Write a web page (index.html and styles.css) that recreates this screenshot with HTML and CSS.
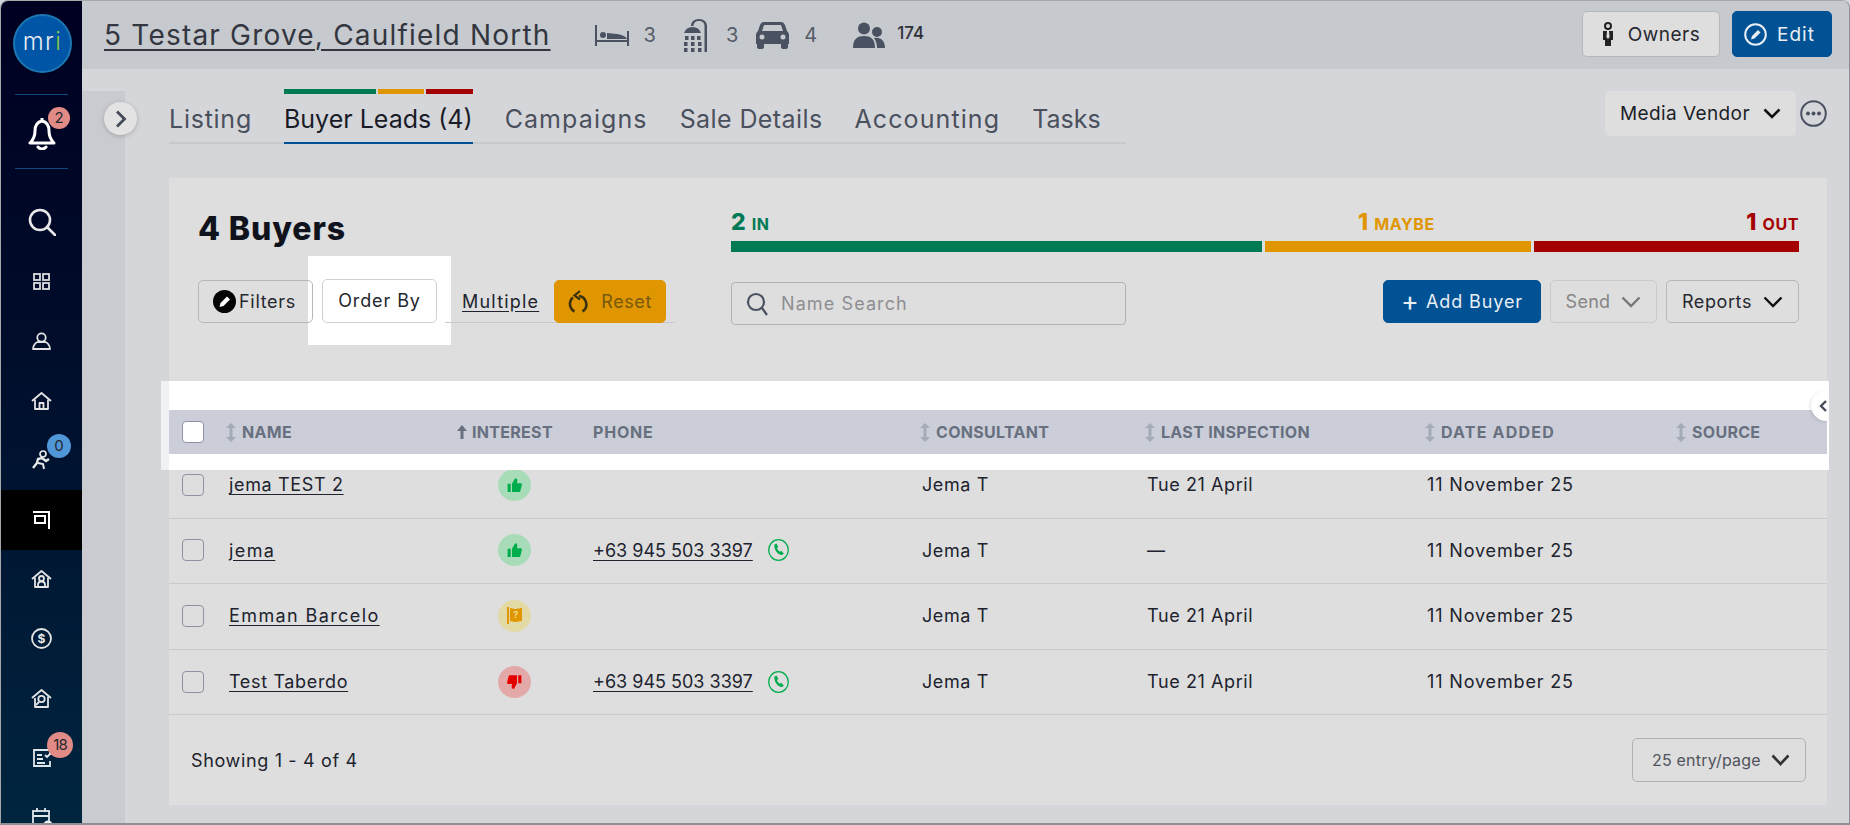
FILE: index.html
```html
<!DOCTYPE html>
<html lang="en">
<head>
  <meta charset="utf-8">
  <title>Buyer Leads</title>
  <link rel="stylesheet" href="styles.css">
</head>
<body>
  <div class="window">
    <!-- Left navigation -->
    <aside class="sidebar">
      <div class="logo-wrap">
        <div class="logo"><span>m</span><span>r</span><span class="logo-i">i</span></div>
      </div>
      <div class="bell-wrap">
        <svg width="28" height="33" viewBox="0 0 28 33" fill="none" stroke="#fff" stroke-width="3" stroke-linejoin="round"><path d="M14 4c-5 1-7 5-7 10 0 5-1 8-5 12h24c-4-4-5-7-5-12 0-5-2-9-7-10z"/><path d="M14 1v3"/><path d="M10 30c2 2.500 6 2.500 8 0" stroke-linecap="round"/></svg>
        <span class="badge badge-red">2</span>
      </div>
      <nav class="side-nav">
        <a class="side-item">
          <svg width="28" height="28" viewBox="0 0 28 28" fill="none" stroke="#e8e8e8" stroke-width="2.600"><circle cx="12" cy="12" r="10"/><path d="M19 19l8 8" stroke-linecap="round"/></svg>
        </a>
        <a class="side-item">
          <svg width="17" height="17" viewBox="0 0 17 17" fill="none" stroke="#dcdcdc" stroke-width="1.800"><rect x="1" y="1" width="6" height="6"/><rect x="10" y="1" width="6" height="6"/><rect x="1" y="10" width="6" height="6"/><rect x="10" y="10" width="6" height="6"/></svg>
        </a>
        <a class="side-item">
          <svg width="19" height="18" viewBox="0 0 19 18" fill="none" stroke="#e4e4e4" stroke-width="1.800"><circle cx="9.500" cy="5.500" r="4.200"/><path d="M1 17c0-4 3-6.500 4.500-7h8C15 10.500 18 13 18 17z" stroke-linejoin="round"/></svg>
        </a>
        <a class="side-item">
          <svg width="21" height="18" viewBox="0 0 21 18" fill="none" stroke="#e4e4e4" stroke-width="1.800" stroke-linejoin="round"><path d="M1 9l9.500-8L20 9"/><path d="M4 7.500V17h13V7.500"/><path d="M8.500 17v-6h4v6"/></svg>
        </a>
        <a class="side-item">
          <svg width="20" height="20" viewBox="0 0 20 20" fill="none" stroke="#e8e8e8" stroke-width="1.700"><circle cx="11" cy="4" r="3"/><path d="M1 18l4-5 1-4 4-1 4 3 3-2" stroke-width="2.400"/><path d="M6 13l5 1 1 5" stroke-width="2"/></svg>
          <span class="badge badge-blue">0</span>
        </a>
        <a class="side-item is-active">
          <svg width="17" height="19" viewBox="0 0 17 19" fill="none" stroke="#fff" stroke-width="2"><path d="M0 2h16v17"/><rect x="2" y="6" width="10" height="7"/></svg>
        </a>
        <a class="side-item">
          <svg width="21" height="18" viewBox="0 0 21 18" fill="none" stroke="#e4e4e4" stroke-width="1.800" stroke-linejoin="round"><path d="M1 9l9.500-8L20 9"/><path d="M4 7.500V17h13V7.500"/><circle cx="10.500" cy="8.500" r="2.500"/><path d="M7 17v-2c0-2 1.500-3.500 3.500-3.500S14 13 14 15v2"/></svg>
        </a>
        <a class="side-item">
          <svg width="21" height="21" viewBox="0 0 21 21" fill="none" stroke="#e4e4e4" stroke-width="1.800"><circle cx="10.500" cy="10.500" r="9.500"/><text x="10.500" y="15" text-anchor="middle" class="dollar">$</text></svg>
        </a>
        <a class="side-item">
          <svg width="21" height="19" viewBox="0 0 21 19" fill="none" stroke="#e4e4e4" stroke-width="1.800" stroke-linejoin="round"><path d="M1 9l9.500-8L20 9"/><path d="M4 9v9h13V7.500"/><circle cx="10.500" cy="10" r="3.200"/><path d="M8 13l-3 3"/></svg>
        </a>
        <a class="side-item">
          <svg width="18" height="18" viewBox="0 0 18 18" fill="none" stroke="#dfe6ea" stroke-width="1.800"><path d="M17 6V1H1v16h16v-5"/><path d="M4 6h5M4 10h6M4 14h8"/><path d="M12 6l2 2 3-3"/></svg>
          <span class="badge badge-red badge-wide">18</span>
        </a>
        <a class="side-item">
          <svg width="20" height="20" viewBox="0 0 20 20" fill="none" stroke="#dfe6ea" stroke-width="1.800"><rect x="1" y="3" width="16" height="16"/><path d="M1 8h16M5 0v4M13 0v4"/><circle cx="16" cy="17" r="4.500" fill="#e8eef0" stroke="none"/></svg>
        </a>
      </nav>
    </aside>

    <main class="main">
      <!-- Property header -->
      <header class="topbar">
        <a class="address">5 Testar Grove, Caulfield North</a>
        <div class="features">
          <svg class="feat-bed" width="34" height="22" viewBox="0 0 34 22" fill="#4a5262"><path d="M0 1h2v21H0zM32 7h2v15h-2zM2 16h30v2H2z"/><circle cx="8" cy="11" r="3"/><path d="M12 9l10 1c3 .3 9 2 10 5H12z"/></svg>
          <span class="feat-num">3</span>
          <svg class="feat-shower" width="28" height="34" viewBox="0 0 28 34" fill="#4a5262"><path d="M1 15a9 9 0 0 1 17 0H1z"/><path d="M8 8c0-4 3-7 8-7 5 0 8 3 8 7v26h-2.500V8c0-3-2-5-5.500-5s-5.500 2-5.500 5z"/><path d="M2 18h3.500v4H2zM8 18h3.500v4H8zM14 18h3.500v4H14zM1 24h3.500v4H1zM8 24h3.500v4H8zM15 24h3.500v4H15zM1 30h3.500v4H1zM8 30h3.500v4H8zM15 30h3.500v4H15z"/></svg>
          <span class="feat-num">3</span>
          <svg class="feat-car" width="33" height="28" viewBox="0 0 33 28" fill="#4a5262"><path d="M8 1h17c2 0 3 1 4 3l2 6c1 1 2 2 2 4v9h-1v3c0 1-1 2-2 2h-3c-1 0-2-1-2-2v-3H8v3c0 1-1 2-2 2H3c-1 0-2-1-2-2v-3H0v-9c0-2 1-3 2-4l2-6c1-2 2-3 4-3z"/><path d="M8 4h17l2 6H6z" fill="#c6c9ce"/><circle cx="6" cy="16" r="2.500" fill="#c6c9ce"/><circle cx="27" cy="16" r="2.500" fill="#c6c9ce"/></svg>
          <span class="feat-num">4</span>
          <svg class="feat-people" width="32" height="26" viewBox="0 0 32 26" fill="#4a5262"><circle cx="11" cy="6.500" r="6"/><path d="M0 26c0-9 4-12 11-12s11 3 11 12z"/><circle cx="24" cy="10" r="5"/><path d="M21 16c7-1 11 3 11 10h-8c0-4-1-7-3-10z"/></svg>
          <span class="feat-total">174</span>
        </div>
        <div class="top-actions">
          <button class="btn btn-owners" type="button">
            <svg width="12" height="24" viewBox="0 0 12 24" fill="#222"><circle cx="6" cy="4" r="3" fill="none" stroke="#222" stroke-width="2"/><path d="M1 9h10v9H9v6H3v-6H1z"/><path d="M5 9h2l.6 6L6 17l-1.600-2z" fill="#ddd"/></svg>
            Owners
          </button>
          <button class="btn btn-primary btn-edit" type="button">
            <svg width="23" height="23" viewBox="0 0 23 23" fill="none" stroke="#e8eef5" stroke-width="2"><circle cx="11.500" cy="11.500" r="10.300"/><path d="M7 16.500l1-3.500 6-6 2.500 2.500-6 6z" fill="#e8eef5" stroke="none"/></svg>
            Edit
          </button>
        </div>
      </header>

      <div class="content">
        <div class="strip"></div>
        <span class="side-handle">
          <svg width="12" height="18" viewBox="0 0 12 18" fill="none" stroke="#454b58" stroke-width="2.800"><path d="M2 1.500L9.500 9 2 16.500"/></svg>
        </span>

        <div class="page">
          <!-- Tabs -->
          <div class="tabbar">
            <div class="tabs">
              <a class="tab tab-first">Listing</a>
              <a class="tab tab-active">
                <span class="tab-bars"><i class="seg-green"></i><i class="seg-orange"></i><i class="seg-red"></i></span>
                Buyer Leads (4)
              </a>
              <a class="tab tab-wide">Campaigns</a>
              <a class="tab tab-narrow">Sale Details</a>
              <a class="tab tab-wide">Accounting</a>
              <a class="tab tab-tight">Tasks</a>
            </div>
            <div class="tab-right">
              <div class="vendor-select">Media Vendor
                <svg width="18" height="11" viewBox="0 0 18 11" fill="none" stroke="#111" stroke-width="2.600"><path d="M1.500 1.500L9 9l7.500-7.500"/></svg>
              </div>
              <svg class="more" width="27" height="27" viewBox="0 0 27 27" fill="none" stroke="#4a5262" stroke-width="2"><circle cx="13.500" cy="13.500" r="12.300"/><g fill="#4a5262" stroke="none"><circle cx="8" cy="13.500" r="2"/><circle cx="13.500" cy="13.500" r="2"/><circle cx="19" cy="13.500" r="2"/></g></svg>
            </div>
          </div>

          <section class="panel">
            <div class="panel-top">
              <h1 class="panel-title">4 Buyers</h1>
              <div class="stats">
                <div class="stat-labels">
                  <span class="stat stat-in"><b>2</b> IN</span>
                  <span class="stat stat-maybe"><b>1</b> MAYBE</span>
                  <span class="stat stat-out"><b>1</b> OUT</span>
                </div>
                <div class="stat-bar"><i class="seg-green"></i><i class="seg-orange"></i><i class="seg-red"></i></div>
              </div>

              <div class="filters">
                <button class="btn btn-filters" type="button">
                  <svg width="23" height="23" viewBox="0 0 23 23"><circle cx="11.500" cy="11.500" r="11.500" fill="#050505"/><path d="M6.500 17l1-4 6.500-6.500 3 3-6.500 6.500z" fill="#fff"/></svg>
                  Filters
                </button>
                <span class="order-spot">
                  <button class="btn btn-order" type="button">Order By</button>
                </span>
                <a class="multiple">Multiple</a>
                <button class="btn btn-reset" type="button">
                  <svg width="20" height="24" viewBox="0 0 20 24" fill="none" stroke="#3d3210" stroke-width="2.600"><path d="M5 7.500a8.500 8.500 0 0 0 1.500 14"/><path d="M11 6a8.500 8.500 0 0 1 3.500 15.500"/><path d="M12 1L6.500 5.500l5.500 4" stroke-width="2.200"/></svg>
                  Reset
                </button>
              </div>

              <div class="tools">
                <label class="search">
                  <svg width="22" height="24" viewBox="0 0 22 24" fill="none" stroke="#4a5262" stroke-width="2.200"><circle cx="10" cy="10" r="8"/><path d="M16 16l5 7"/></svg>
                  <span class="search-text">Name Search</span>
                </label>
                <div class="tool-buttons">
                  <button class="btn btn-primary btn-add" type="button"><span class="plus">+</span> Add Buyer</button>
                  <button class="btn btn-send" type="button">Send
                    <svg width="20" height="12" viewBox="0 0 20 12" fill="none" stroke="#777" stroke-width="2.400"><path d="M1.500 1.500L10 10l8.500-8.500"/></svg>
                  </button>
                  <button class="btn btn-reports" type="button">Reports
                    <svg width="20" height="12" viewBox="0 0 20 12" fill="none" stroke="#111" stroke-width="2.400"><path d="M1.500 1.500L10 10l8.500-8.500"/></svg>
                  </button>
                </div>
              </div>
            </div>

            <!-- Buyers table -->
            <div class="head-band">
              <div class="tr thead">
                <span class="cell-check"><span class="checkbox checkbox-white"></span></span>
                <span class="th"><svg class="sort" width="10" height="19" viewBox="0 0 10 19" fill="#a4abb7"><path d="M5 0l5 5H6.500v9H10l-5 5-5-5h3.500V5H0z"/></svg>NAME</span>
                <span class="th"><svg class="sort-up" width="10" height="14" viewBox="0 0 10 14" fill="#687080"><path d="M5 0l5 6H6.500v8h-3V6H0z"/></svg>INTEREST</span>
                <span class="th th-phone">PHONE</span>
                <span class="th"><svg class="sort" width="10" height="19" viewBox="0 0 10 19" fill="#a4abb7"><path d="M5 0l5 5H6.500v9H10l-5 5-5-5h3.500V5H0z"/></svg>CONSULTANT</span>
                <span class="th"><svg class="sort" width="10" height="19" viewBox="0 0 10 19" fill="#a4abb7"><path d="M5 0l5 5H6.500v9H10l-5 5-5-5h3.500V5H0z"/></svg>LAST INSPECTION</span>
                <span class="th th-wide"><svg class="sort" width="10" height="19" viewBox="0 0 10 19" fill="#a4abb7"><path d="M5 0l5 5H6.500v9H10l-5 5-5-5h3.500V5H0z"/></svg>DATE ADDED</span>
                <span class="th"><svg class="sort" width="10" height="19" viewBox="0 0 10 19" fill="#a4abb7"><path d="M5 0l5 5H6.500v9H10l-5 5-5-5h3.500V5H0z"/></svg>SOURCE</span>
              </div>
              <span class="band-handle">
                <svg width="8" height="12" viewBox="0 0 8 12" fill="none" stroke="#454b58" stroke-width="2.400"><path d="M7 1L2 6l5 5"/></svg>
              </span>
            </div>

            <div class="tbody">
              <div class="tr row row-first">
                <span class="cell-check"><span class="checkbox"></span></span>
                <a class="name">jema TEST 2</a>
                <span class="interest"><span class="dot dot-in"><svg width="15" height="16" viewBox="0 0 24 24" fill="#00ad4c"><path d="M1 10h5v13H1zM8 23V10l5-9c2 0 4 1.500 3.500 4.500L16 9h6c1.200 0 2 1 2 2l-2.500 10c-.3 1.200-1 2-2.500 2z"/></svg></span></span>
                <span class="phone"></span>
                <span class="cell-consultant">Jema T</span>
                <span class="cell-last">Tue 21 April</span>
                <span class="cell-date">11 November 25</span>
                <span></span>
              </div>
              <div class="tr row">
                <span class="cell-check"><span class="checkbox"></span></span>
                <a class="name name-wide">jema</a>
                <span class="interest"><span class="dot dot-in"><svg width="15" height="16" viewBox="0 0 24 24" fill="#00ad4c"><path d="M1 10h5v13H1zM8 23V10l5-9c2 0 4 1.500 3.500 4.500L16 9h6c1.200 0 2 1 2 2l-2.500 10c-.3 1.200-1 2-2.500 2z"/></svg></span></span>
                <span class="phone"><a class="phone-link">+63 945 503 3397</a>
                  <svg class="wa" width="21" height="22" viewBox="0 0 21 22" fill="none" stroke="#00ad4c" stroke-width="1.300"><ellipse cx="10.500" cy="11" rx="9.800" ry="10.300"/><path d="M6.500 5.500l2-1 1.800 3.500-1.300 1c.4 1.500 1.500 3 3 3.800l1.200-1 2.600 2.700-1.600 1.500c-4 .5-8.700-5.500-7.700-10.500z" fill="#00ad4c" stroke="none"/></svg>
                </span>
                <span class="cell-consultant">Jema T</span>
                <span class="cell-last">—</span>
                <span class="cell-date">11 November 25</span>
                <span></span>
              </div>
              <div class="tr row">
                <span class="cell-check"><span class="checkbox"></span></span>
                <a class="name name-wide">Emman Barcelo</a>
                <span class="interest"><span class="dot dot-maybe"><svg width="16" height="17" viewBox="0 0 16 17" fill="#e09600"><path d="M0 0h2v17H0zM3 1l5 1 7-1v13l-7 1-5-1z"/><text x="9" y="11" text-anchor="middle" class="flag-q">?</text></svg></span></span>
                <span class="phone"></span>
                <span class="cell-consultant">Jema T</span>
                <span class="cell-last">Tue 21 April</span>
                <span class="cell-date">11 November 25</span>
                <span></span>
              </div>
              <div class="tr row">
                <span class="cell-check"><span class="checkbox"></span></span>
                <a class="name">Test Taberdo</a>
                <span class="interest"><span class="dot dot-out"><svg width="15" height="16" viewBox="0 0 24 24" fill="#e40000"><path d="M18 1h5v13h-5zM16 1v13l-5 9c-2 0-4-1.500-3.500-4.500L8 15H2c-1.200 0-2-1-2-2L2.500 3C2.800 1.800 3.500 1 5 1z"/></svg></span></span>
                <span class="phone"><a class="phone-link">+63 945 503 3397</a>
                  <svg class="wa" width="21" height="22" viewBox="0 0 21 22" fill="none" stroke="#00ad4c" stroke-width="1.300"><ellipse cx="10.500" cy="11" rx="9.800" ry="10.300"/><path d="M6.500 5.500l2-1 1.800 3.500-1.300 1c.4 1.500 1.500 3 3 3.800l1.200-1 2.600 2.700-1.600 1.500c-4 .5-8.700-5.500-7.700-10.500z" fill="#00ad4c" stroke="none"/></svg>
                </span>
                <span class="cell-consultant">Jema T</span>
                <span class="cell-last">Tue 21 April</span>
                <span class="cell-date">11 November 25</span>
                <span></span>
              </div>
            </div>

            <div class="panel-foot">
              <span class="showing">Showing 1 - 4 of 4</span>
              <div class="page-size">25 entry/page
                <svg width="19" height="12" viewBox="0 0 19 12" fill="none" stroke="#333" stroke-width="2.600"><path d="M1.500 1.500L9.500 10l8-8.500"/></svg>
              </div>
            </div>
          </section>
        </div>
      </div>
    </main>
  </div>
</body>
</html>
```

FILE: styles.css
```css
* {
  box-sizing: border-box;
}
html, body {
  margin: 0;
  height: 825px;
  overflow: hidden;
  background: #d5d6da;
}
body {
  font-family: Inter, "Open Sans", sans-serif;
  color: #20232e;
}
.window {
  display: flex;
  height: 825px;
  border-top: 1px solid #a6a7aa;
  border-right: 1px solid #8d8e91;
  border-bottom: 2px solid #8d8e91;
  border-left: 1px solid #a6a7aa;
  border-radius: 8px 8px 0 0;
  overflow: hidden;
}

/* Sidebar */
.sidebar {
  width: 81px;
  flex-shrink: 0;
  background: linear-gradient(180deg, #000021 0%, #000c2a 40%, #00253f 100%);
  overflow: hidden;
}
.logo-wrap {
  height: 94px;
  padding-top: 13px;
  margin: 0 14px;
  border-bottom: 1px solid #0a4a80;
}
.logo {
  width: 59px;
  height: 59px;
  margin-left: -2px;
  border-radius: 50%;
  background: #0055a6;
  border: 2px solid #1b78b2;
  display: flex;
  justify-content: center;
  align-items: center;
  color: #e9eef2;
  font-size: 24px;
  font-weight: 300;
  letter-spacing: 1.5px;
  padding-bottom: 4px;
}
.logo-i {
  color: #8dc63f;
}
.bell-wrap {
  position: relative;
  height: 74px;
  margin: 0 14px;
  border-bottom: 1px solid #0a4a80;
  padding: 22px 0 0 13px;
}
.bell-wrap .badge {
  top: 12px;
  left: 33px;
}
.side-nav {
  padding-top: 23px;
}
.side-item {
  position: relative;
  display: flex;
  height: 59.6px;
  justify-content: center;
  align-items: center;
}
.side-item .badge {
  top: 4px;
  left: 46px;
}
.is-active {
  background: #000;
}
.badge {
  position: absolute;
  width: 22px;
  height: 22px;
  border-radius: 50%;
  font-size: 15px;
  line-height: 22px;
  text-align: center;
  color: #26262e;
}
.badge-red {
  background: #e18b86;
}
.badge-blue {
  width: 24px;
  height: 24px;
  line-height: 24px;
  background: #4f97d6;
}
.badge-wide {
  width: 26px;
  height: 26px;
  line-height: 26px;
  letter-spacing: -1px;
}
.dollar {
  font-size: 12px;
  font-weight: 700;
  fill: #e4e4e4;
  stroke: none;
}

/* Header */
.main {
  flex: 1;
  display: flex;
  flex-direction: column;
  min-width: 0;
}
.topbar {
  height: 68px;
  flex-shrink: 0;
  display: flex;
  align-items: center;
  padding: 0 17px 0 22px;
  background: #c6c9ce;
}
.address {
  font-size: 28px;
  color: #33363f;
  text-decoration: underline;
  text-decoration-thickness: 2px;
  text-underline-offset: 4px;
  letter-spacing: 1.2px;
  white-space: nowrap;
}
.features {
  display: flex;
  align-items: center;
  margin-left: 44px;
  color: #555b68;
  font-size: 20px;
}
.feat-num {
  margin: 0 18px 0 15px;
}
.feat-shower {
  margin-left: 9px;
}
.feat-people {
  margin-left: 18px;
}
.feat-total {
  margin-left: 12px;
  font-size: 17px;
  font-weight: 500;
  color: #2d3038;
  position: relative;
  top: -2px;
}
.top-actions {
  margin-left: auto;
  display: flex;
  gap: 12px;
  margin-top: -2px;
}

/* Buttons */
.btn {
  display: inline-flex;
  align-items: center;
  justify-content: center;
  height: 43px;
  border: 1px solid #b5b7bc;
  border-radius: 5px;
  background: transparent;
  font-family: inherit;
  font-size: 18px;
  color: #26282f;
  white-space: nowrap;
  padding: 0;
}
.btn-owners {
  width: 138px;
  height: 46px;
  gap: 14px;
  background: #dedede;
  font-size: 19px;
  letter-spacing: .5px;
}
.btn-primary {
  background: #005295;
  border-color: #005295;
  color: #e9eef4;
}
.btn-edit {
  width: 100px;
  height: 46px;
  gap: 10px;
  justify-content: flex-start;
  padding-left: 11px;
  font-size: 19px;
  letter-spacing: 1px;
}
.btn-filters {
  width: 115px;
  gap: 3px;
  justify-content: flex-start;
  padding-left: 14px;
  letter-spacing: .7px;
}
.order-spot {
  display: flex;
  align-items: center;
  width: 143px;
  height: 89px;
  margin: -24px -14px -22px -5px;
  padding-left: 14px;
  background: #fff;
}
.btn-order {
  width: 115px;
  height: 44px;
  background: #fff;
  border-color: #cfd1d6;
  letter-spacing: .9px;
}
.multiple {
  margin-left: 25px;
  font-size: 18px;
  letter-spacing: 1.2px;
  text-decoration: underline;
  text-underline-offset: 3px;
}
.btn-reset {
  width: 112px;
  margin-left: 15px;
  gap: 13px;
  justify-content: flex-start;
  padding-left: 13px;
  background: #e09600;
  border-color: #e09600;
  color: #77590f;
  letter-spacing: .6px;
}
.btn-add {
  width: 158px;
  gap: 7px;
  letter-spacing: .9px;
}
.plus {
  font-size: 27px;
  line-height: 1;
  letter-spacing: 0;
}
.btn-send {
  width: 107px;
  gap: 11px;
  border-color: #c9cacd;
  color: #858585;
  letter-spacing: .3px;
}
.btn-reports {
  width: 133px;
  gap: 11px;
  letter-spacing: .6px;
}

/* Content + tabs */
.content {
  flex: 1;
  display: flex;
  position: relative;
  min-height: 0;
}
.strip {
  width: 43px;
  margin-top: 22px;
  background: #c9cbd0;
}
.side-handle {
  position: absolute;
  left: 22px;
  top: 33px;
  width: 33px;
  height: 33px;
  border-radius: 50%;
  background: #e3e3e3;
  box-shadow: 0 1px 5px rgba(0, 0, 0, .2);
  display: flex;
  align-items: center;
  justify-content: center;
}
.page {
  flex: 1;
  padding: 22px 22px 18px 44px;
  min-width: 0;
  display: flex;
  flex-direction: column;
}
.tabbar {
  display: flex;
  justify-content: space-between;
  height: 87px;
  flex-shrink: 0;
}
.tabs {
  display: flex;
  width: 957px;
  height: 53px;
  align-items: flex-end;
  gap: 32px;
  border-bottom: 2px solid #c8c9cd;
}
.tab {
  position: relative;
  font-size: 25px;
  line-height: 34px;
  padding-bottom: 6px;
  color: #4b505d;
  white-space: nowrap;
  letter-spacing: .6px;
}
.tab-first {
  letter-spacing: .75px;
}
.tab-wide {
  letter-spacing: 1.1px;
}
.tab-narrow {
  letter-spacing: .4px;
}
.tab-tight {
  letter-spacing: 0;
}
.tab-active {
  color: #191c28;
  margin-bottom: -2px;
  padding-bottom: 6px;
  border-bottom: 2px solid #005295;
  letter-spacing: 0;
}
.tab-bars {
  position: absolute;
  top: -13px;
  left: 0;
  right: 0;
  height: 5px;
  display: flex;
  gap: 2px;
}
.seg-green {
  flex: 2;
  background: #007a55;
}
.seg-orange {
  flex: 1;
  background: #e09600;
}
.seg-red {
  flex: 1;
  background: #a40000;
}
.tab-right {
  display: flex;
  gap: 4px;
  height: 45px;
  align-items: center;
}
.vendor-select {
  display: flex;
  align-items: center;
  justify-content: center;
  gap: 13px;
  width: 191px;
  height: 45px;
  background: #dedede;
  border-radius: 5px;
  font-size: 19px;
  letter-spacing: .4px;
  color: #1c1e28;
}

/* Panel */
.panel {
  flex: 1;
  background: #dedede;
  position: relative;
}
.panel-top {
  display: grid;
  grid-template-columns: 533px 1068px;
  grid-template-rows: 70px 44px;
  padding: 32px 0 57px 29px;
}
.panel-title {
  margin: 0;
  font-size: 32px;
  line-height: 38px;
  font-weight: 800;
  letter-spacing: .9px;
  color: #10121c;
}
.stat-labels {
  display: flex;
  justify-content: space-between;
  height: 24px;
  font-size: 16px;
  font-weight: 700;
  line-height: 24px;
  letter-spacing: .6px;
}
.stat b {
  font-size: 23px;
  font-weight: 800;
  margin-right: 1px;
}
.stat-in {
  color: #007a55;
  width: 627px;
}
.stat-maybe {
  color: #e09600;
  flex: 1;
}
.stat-out {
  color: #a40000;
}
.stat-bar {
  display: grid;
  grid-template-columns: 531px 266px 265px;
  gap: 3px;
  height: 11px;
  margin-top: 7px;
}
.filters {
  display: flex;
  align-items: center;
  height: 43px;
  position: relative;
  align-self: start;
}
.filters::after {
  content: "";
  position: absolute;
  left: 247px;
  right: 56px;
  bottom: 0;
  height: 1px;
  background: #c8c9cd;
}
.filters .btn {
  position: relative;
  z-index: 1;
}
.tools {
  display: flex;
  justify-content: space-between;
}
.search {
  width: 395px;
  height: 43px;
  margin-top: 2px;
  display: flex;
  align-items: center;
  gap: 13px;
  padding-left: 14px;
  border: 1px solid #b1b2b8;
  border-radius: 4px;
}
.search-text {
  color: #8e8e92;
  font-size: 18px;
  letter-spacing: 1.1px;
}
.tool-buttons {
  display: flex;
  gap: 9px;
}

/* Table */
.tr {
  display: grid;
  grid-template-columns: 57px 229px 138px 327px 225px 280px 251px 151px;
  align-items: center;
}
.head-band {
  position: relative;
  z-index: 2;
  margin: 0 -2px 0 -8px;
  padding: 29px 2px 16px 8px;
  background: linear-gradient(90deg, #f0f1f5 8px, #fff 8px);
}
.thead {
  height: 44px;
  background: #cbced8;
}
.th {
  display: flex;
  align-items: center;
  font-size: 16px;
  font-weight: 700;
  color: #687080;
  white-space: nowrap;
  letter-spacing: .3px;
}
.th-wide {
  letter-spacing: 1.2px;
}
.th-phone {
  letter-spacing: .8px;
}
.sort {
  margin-right: 6px;
}
.sort-up {
  margin-right: 5px;
  margin-left: 2px;
}
.cell-check {
  padding-left: 13px;
  display: flex;
}
.checkbox {
  width: 22px;
  height: 22px;
  border: 1px solid #8e93a3;
  border-radius: 4px;
}
.checkbox-white {
  background: #fff;
}
.band-handle {
  position: absolute;
  right: 2px;
  top: 9px;
  width: 16px;
  height: 31px;
  border-radius: 16px 0 0 16px;
  background: #fff;
  box-shadow: -1px 1px 3px rgba(0, 0, 0, .12);
  display: flex;
  align-items: center;
  justify-content: flex-end;
}
.tbody {
  margin-top: -17px;
}
.row {
  height: 65.6px;
  border-bottom: 1px solid #c9cacd;
  font-size: 18px;
  letter-spacing: .6px;
  padding-bottom: 1px;
}
.name {
  padding-left: 3px;
  text-decoration: underline;
  text-underline-offset: 3px;
  white-space: nowrap;
  color: #20232e;
  letter-spacing: .65px;
}
.name-wide {
  letter-spacing: 1.4px;
}
.row > .cell-consultant {
  padding-left: 2px;
}
.row > .cell-last {
  padding-left: 2px;
}
.row > .cell-date {
  padding-left: 2px;
  letter-spacing: .85px;
}
.interest {
  padding-left: 43px;
  display: flex;
}
.dot {
  width: 33px;
  height: 32px;
  border-radius: 50%;
  display: flex;
  align-items: center;
  justify-content: center;
}
.dot-in {
  background: #a8dcb9;
}
.dot-maybe {
  background: #e3d9a5;
}
.dot-out {
  background: #e3a9a9;
}
.flag-q {
  font-size: 9px;
  font-weight: 700;
  fill: #f4dc99;
}
.phone {
  display: flex;
  align-items: center;
  gap: 15px;
  letter-spacing: 0;
}
.phone-link {
  text-decoration: underline;
  text-underline-offset: 3px;
  white-space: nowrap;
}
.panel-foot {
  display: flex;
  justify-content: space-between;
  align-items: center;
  height: 90px;
  padding: 0 21px 0 22px;
}
.showing {
  font-size: 18px;
  letter-spacing: .65px;
}
.page-size {
  display: flex;
  align-items: center;
  justify-content: space-between;
  width: 174px;
  height: 44px;
  padding: 0 15px 0 19px;
  border: 1px solid #b1b2b8;
  border-radius: 5px;
  font-size: 16px;
  color: #50535c;
  white-space: nowrap;
  letter-spacing: .2px;
}
```
